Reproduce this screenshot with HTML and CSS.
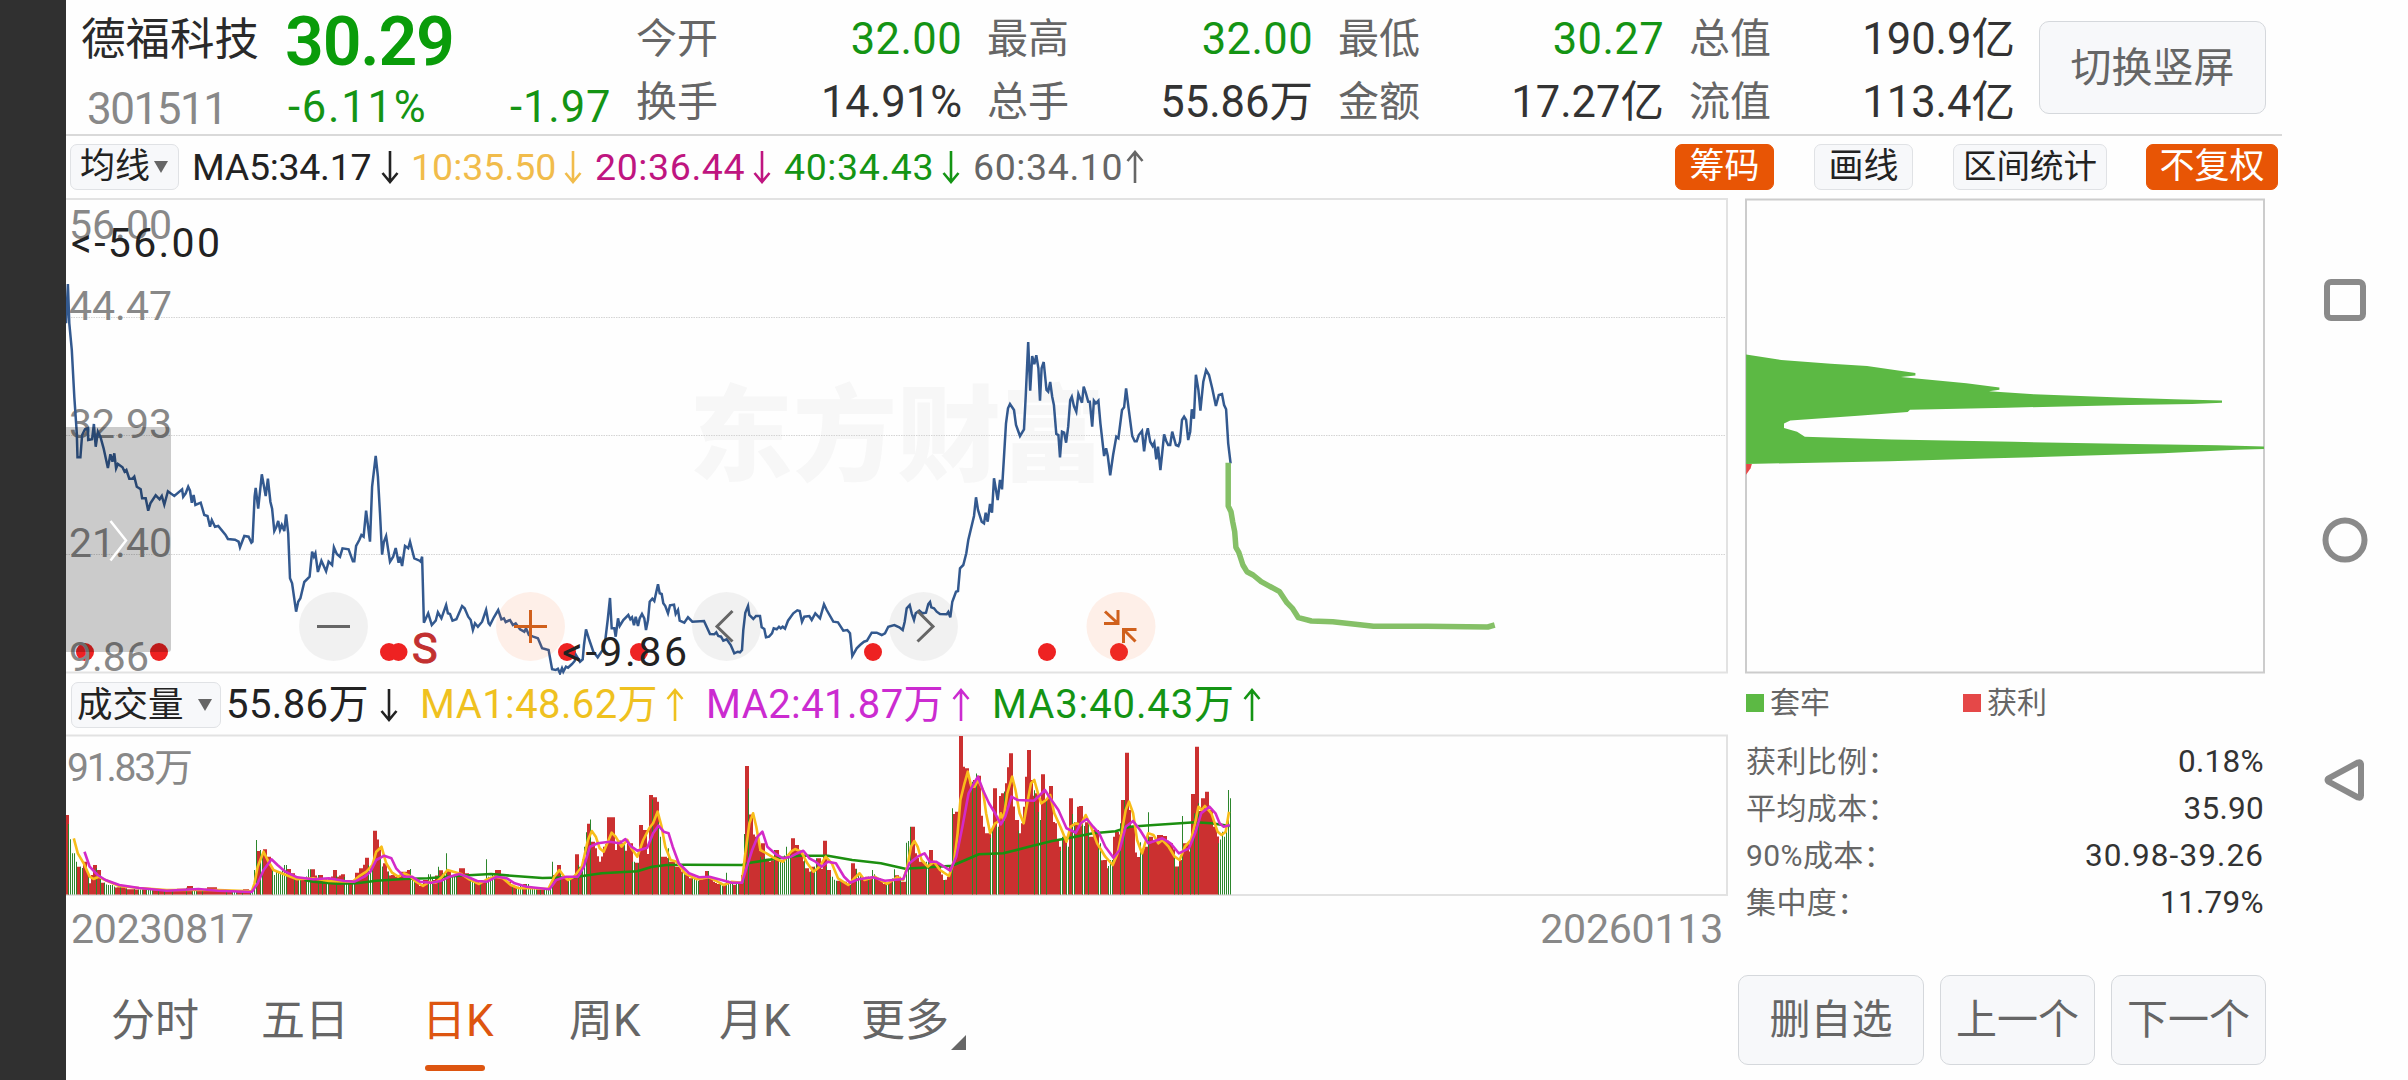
FILE: index.html
```html
<!DOCTYPE html>
<html lang="zh-CN">
<head>
    <meta charset="UTF-8">
    <meta name="viewport" content="width=device-width, initial-scale=1.0">
    <title>德福科技 301511</title>
    <link rel="stylesheet" href="styles.css">
</head>
<body>
    <div class="cutout"></div>
    <div class="app">
        <header class="quote">
            <div class="stock">
                <div class="stock-top">
                    <span class="name">德福科技</span>
                    <span class="price">30.29</span>
                </div>
                <div class="stock-bottom">
                    <span class="code">301511</span>
                    <span class="percent">-6.11%</span>
                    <span class="change">-1.97</span>
                </div>
            </div>
            <dl class="stats">
                <div><dt>今开</dt><dd class="down">32.00</dd></div>
                <div><dt>最高</dt><dd class="down">32.00</dd></div>
                <div><dt>最低</dt><dd class="down">30.27</dd></div>
                <div><dt>总值</dt><dd>190.9亿</dd></div>
                <div><dt>换手</dt><dd>14.91%</dd></div>
                <div><dt>总手</dt><dd>55.86万</dd></div>
                <div><dt>金额</dt><dd>17.27亿</dd></div>
                <div><dt>流值</dt><dd>113.4亿</dd></div>
            </dl>
            <button class="btn rotate">切换竖屏</button>
        </header>

        <div class="toolbar">
            <button class="select ma-select">均线<i class="caret"></i></button>
            <span class="ma ma5">MA5:34.17</span><svg class="arrow ma5" viewBox="0 0 18 34"><path d="M9 1v31M1.500 23l7.500 9 7.500-9"/></svg>
            <span class="ma ma10">10:35.50</span><svg class="arrow ma10" viewBox="0 0 18 34"><path d="M9 1v31M1.500 23l7.500 9 7.500-9"/></svg>
            <span class="ma ma20">20:36.44</span><svg class="arrow ma20" viewBox="0 0 18 34"><path d="M9 1v31M1.500 23l7.500 9 7.500-9"/></svg>
            <span class="ma ma40">40:34.43</span><svg class="arrow ma40" viewBox="0 0 18 34"><path d="M9 1v31M1.500 23l7.500 9 7.500-9"/></svg>
            <span class="ma ma60">60:34.10</span><svg class="arrow ma60" viewBox="0 0 18 34"><path d="M9 33V2M1.500 11L9 2l7.500 9"/></svg>
            <div class="tools">
                <button class="tool on chips-btn">筹码</button>
                <button class="tool draw-btn">画线</button>
                <button class="tool range-btn">区间统计</button>
                <button class="tool on adjust-btn">不复权</button>
            </div>
        </div>

        <main class="main">
            <section class="charts">
                <svg class="price-chart" viewBox="66 198 1662 477">
                    <text class="watermark" x="689" y="473">东方财富</text>
                    <path class="grid" d="M66 317.500H1727M66 435.500H1727M66 554.500H1727"/>
                    <path class="frame" d="M66 199H1727V672.500H66"/>
                    <g class="dots">
                        <circle cx="85" cy="652" r="9"/><circle cx="159" cy="652" r="9"/>
                        <circle cx="389" cy="652" r="9"/><circle cx="398.500" cy="652" r="9"/>
                        <circle cx="567" cy="652" r="9"/><circle cx="639" cy="652" r="9"/>
                        <circle cx="873" cy="652" r="9"/><circle cx="1047" cy="652" r="9"/>
                        <circle cx="1119" cy="652" r="9"/>
                    </g>
                    <text class="sell" x="412" y="663">S</text>
                    <g class="axis">
                        <text x="69" y="239">56.00</text>
                        <text x="69" y="319.500">44.47</text>
                        <text x="69" y="438">32.93</text>
                        <text x="69" y="557">21.40</text>
                        <text x="69" y="671">9.86</text>
                    </g>
                    <path id="price" class="price-line"/>
                    <path id="forecast" class="forecast-line"/>
                    <g class="extreme">
                        <text x="71" y="257" textLength="149">&lt;-56.00</text>
                        <text x="562" y="666" textLength="125">&lt;-9.86</text>
                    </g>
                    <path class="handle" d="M66 427H168a3 3 0 0 1 3 3V649a3 3 0 0 1-3 3H66z"/>
                    <path class="handle-icon" d="M110.500 521L126 540.500 110.500 560.500"/>
                    <g class="round">
                        <circle cx="333.500" cy="626.500" r="34.500"/><path d="M317 626.500H350"/>
                        <circle cx="726.500" cy="626.500" r="34.500"/><path d="M732.500 611L717 626.500 732.500 641.500"/>
                        <circle cx="923.500" cy="626.500" r="34.500"/><path d="M917.500 611L933 626.500 917.500 641.500"/>
                    </g>
                    <g class="round hot">
                        <circle cx="530.500" cy="626.500" r="34.500"/><path d="M514 626.500H547M530.500 610V643"/>
                        <circle cx="1121" cy="626.500" r="34.500"/><path d="M1104 623.500H1118V610M1105 611.500L1118 623.500M1136.500 629.500H1123.500V643M1135.500 641.500L1123.500 629.500"/>
                    </g>
                </svg>

                <div class="volume-bar">
                    <button class="select vol-select">成交量<i class="caret"></i></button>
                    <span class="vol v0">55.86万</span><svg class="arrow v0" viewBox="0 0 18 34"><path d="M9 1v31M1.500 23l7.500 9 7.500-9"/></svg>
                    <span class="vol v1">MA1:48.62万</span><svg class="arrow v1" viewBox="0 0 18 34"><path d="M9 33V2M1.500 11L9 2l7.500 9"/></svg>
                    <span class="vol v2">MA2:41.87万</span><svg class="arrow v2" viewBox="0 0 18 34"><path d="M9 33V2M1.500 11L9 2l7.500 9"/></svg>
                    <span class="vol v3">MA3:40.43万</span><svg class="arrow v3" viewBox="0 0 18 34"><path d="M9 33V2M1.500 11L9 2l7.500 9"/></svg>
                </div>

                <svg class="volume-chart" viewBox="66 734 1662 163">
                    <path class="frame" d="M66 735.500H1727V895H66"/>
                    <text class="vol-max" x="67" y="780.500" textLength="126">91.83万</text>
                    <path id="volUp" class="vol-up"/>
                    <path id="volDown" class="vol-down"/>
                    <path id="volMa3" class="vol-ma ma-c"/>
                    <path id="volMa1" class="vol-ma ma-a"/>
                    <path id="volMa2" class="vol-ma ma-b"/>
                </svg>
                <div class="dates"><span>20230817</span><span>20260113</span></div>
            </section>

            <aside class="side">
                <svg class="chips" viewBox="1745 198 520 476">
                    <rect class="chips-frame" x="1746" y="199.500" width="518" height="473"/>
                    <path id="chipsLoss" class="chips-loss"/>
                    <path id="chipsGain" class="chips-gain"/>
                </svg>
                <div class="legend">
                    <span><i class="loss"></i>套牢</span>
                    <span><i class="gain"></i>获利</span>
                </div>
                <dl class="cost">
                    <div><dt>获利比例：</dt><dd>0.18%</dd></div>
                    <div><dt>平均成本：</dt><dd>35.90</dd></div>
                    <div><dt>90%成本：</dt><dd class="wide-range">30.98-39.26</dd></div>
                    <div><dt>集中度：</dt><dd>11.79%</dd></div>
                </dl>
            </aside>
        </main>

        <footer class="bottom">
            <nav class="tabs">
                <a>分时</a>
                <a>五日</a>
                <a class="active">日K</a>
                <a>周K</a>
                <a>月K</a>
                <a class="more">更多</a>
            </nav>
            <div class="actions">
                <button class="btn wide">删自选</button>
                <button class="btn">上一个</button>
                <button class="btn">下一个</button>
            </div>
        </footer>
    </div>

    <div class="system-nav">
        <svg viewBox="0 0 48 48"><rect x="6" y="6" width="36" height="36" rx="4"/></svg>
        <svg viewBox="0 0 48 48"><circle cx="24" cy="24" r="19.500"/></svg>
        <svg viewBox="0 0 48 48"><path d="M7.500 22.300L37 6.500Q40 5.500 40 8.500V39.500Q40 42.500 37 41.500L7.500 25.700Q5.500 24 7.500 22.300z"/></svg>
    </div>

    <script src="charts.js"></script>
</body>
</html>
```
FILE: styles.css
```css
* {
    box-sizing: border-box;
}
body {
    margin: 0;
    width: 2408px;
    height: 1080px;
    display: flex;
    overflow: hidden;
    background: #fefefe;
    font-family: Roboto, "Noto Sans CJK SC", sans-serif;
    color: #2a2a2a;
}
button {
    font-family: inherit;
    padding: 0;
}
dl, dd {
    margin: 0;
}
.cutout {
    width: 66px;
    background: #303030;
}
.app {
    width: 2216px;
    display: flex;
    flex-direction: column;
}

/* header */
.quote {
    height: 136px;
    display: flex;
    border-bottom: 2px solid #d9d9d9;
}
.stock {
    width: 570px;
    padding: 8px 0 0 15px;
}
.stock-top {
    display: flex;
    height: 68px;
    line-height: 68px;
}
.name {
    width: 204px;
    font-size: 44.5px;
    line-height: 64px;
}
.price {
    font-size: 68px;
    font-weight: 600;
    color: #0a9c0a;
    letter-spacing: -1.2px;
}
.stock-bottom {
    display: flex;
    height: 62px;
    line-height: 63px;
    font-size: 43.5px;
    color: #149414;
}
.code {
    width: 207px;
    padding-left: 6px;
    font-size: 44px;
    line-height: 66px;
    letter-spacing: -1.5px;
    color: #888;
}
.percent {
    width: 222px;
    letter-spacing: 1.8px;
}
.change {
    letter-spacing: 0.9px;
}
.stats {
    width: 1404px;
    display: grid;
    grid-template-columns: repeat(4, 351px);
    grid-template-rows: 63px 63px;
    padding-top: 8px;
    line-height: 63px;
}
.stats div {
    display: flex;
    justify-content: space-between;
    padding-right: 25px;
}
.stats dt {
    font-size: 41px;
    color: #666;
}
.stats dd {
    font-size: 43.5px;
    color: #333;
}
.stats .down {
    color: #149414;
    letter-spacing: 0.4px;
}
.btn {
    background: #f7f8fa;
    border: 1.500px solid #d5d8dc;
    border-radius: 10px;
    font-size: 41px;
    line-height: 84px;
    color: #666;
}
.rotate {
    width: 227px;
    height: 93px;
    margin-top: 21px;
    margin-left: -1px;
}

/* indicator rows */
.toolbar, .volume-bar {
    display: flex;
    align-items: center;
    white-space: nowrap;
}
.toolbar {
    height: 62px;
    padding-left: 4px;
    font-size: 37.5px;
}
.select {
    display: flex;
    align-items: center;
    height: 46px;
    background: #f7f8fa;
    border: 1.500px solid #e0e2e5;
    border-radius: 7px;
    font-size: 35px;
    line-height: 42px;
    color: #222;
}
.caret {
    border-left: 7.500px solid transparent;
    border-right: 7.500px solid transparent;
    border-top: 12px solid #666;
}
.ma-select {
    width: 109px;
    padding-left: 9px;
    margin-right: 13px;
}
.ma-select .caret {
    margin-left: 4px;
}
.arrow {
    width: 18px;
    height: 34px;
    fill: none;
    stroke: currentColor;
    stroke-width: 2.6;
}
.ma {
    width: 153px;
    line-height: 62px;
    letter-spacing: 0.6px;
}
.ma.ma5 {
    width: 189px;
    letter-spacing: -0.3px;
}
.toolbar .arrow {
    margin-right: 13px;
}
.toolbar .arrow.ma5 {
    margin-right: 12px;
}
.ma5 {
    color: #222;
}
.ma10 {
    color: #f1bc4b;
}
.ma.ma10 {
    width: 153px;
    letter-spacing: 0;
}
.ma.ma20, .ma.ma40 {
    width: 158px;
}
.ma20 {
    color: #bf1580;
}
.ma40 {
    color: #149414;
}
.ma60 {
    color: #666;
}
.tools {
    flex: 1;
    display: flex;
    justify-content: flex-end;
    padding-right: 4px;
}
.tool {
    height: 46px;
    background: #f7f8fa;
    border: 1.500px solid #e0e2e5;
    border-radius: 7px;
    font-size: 35px;
    line-height: 40px;
    color: #222;
}
.tool.on {
    background: #e85505;
    border-color: #e85505;
    color: #fff;
}
.chips-btn, .draw-btn {
    width: 99px;
    margin-right: 40px;
}
.range-btn {
    width: 154px;
    margin-right: 39px;
    font-size: 33.5px;
}
.adjust-btn {
    width: 132px;
}

/* charts */
.main {
    height: 764px;
    display: flex;
}
.charts {
    width: 1662px;
    margin-right: 17px;
}
.charts svg, .chips {
    display: block;
}
.price-chart {
    width: 1662px;
    height: 477px;
}
.frame, .chips-frame {
    fill: none;
    stroke: #e2e2e2;
    stroke-width: 2;
}
.chips-frame {
    stroke: #ccc;
}
.grid {
    stroke: #d4d4d4;
    stroke-width: 1;
    stroke-dasharray: 1.500 1;
}
.watermark {
    font-size: 104px;
    font-weight: 900;
    fill: #f7f7f7;
}
.dots {
    fill: #ee2222;
}
.sell {
    font-size: 43px;
    fill: #c23030;
    stroke: #c23030;
    stroke-width: 1;
}
.axis {
    font-size: 41px;
    fill: #888;
}
.extreme {
    font-size: 41px;
    fill: #222;
}
.price-line {
    fill: none;
    stroke: #33598f;
    stroke-width: 2.5;
}
.forecast-line {
    fill: none;
    stroke: #85c067;
    stroke-width: 5.5;
    stroke-linejoin: round;
}
.handle {
    fill: rgba(0, 0, 0, 0.2);
}
.handle-icon {
    fill: none;
    stroke: #fff;
    stroke-width: 2.5;
}
.round circle {
    fill: rgba(0, 0, 0, 0.05);
}
.round path {
    fill: none;
    stroke: #666;
    stroke-width: 3;
}
.round.hot circle {
    fill: rgba(255, 110, 40, 0.1);
}
.round.hot path {
    stroke: #d0601c;
}
.volume-bar {
    height: 59px;
    padding-left: 5px;
    font-size: 40px;
}
.vol-select {
    width: 150px;
    margin-right: 5px;
    padding-left: 5px;
    font-size: 35.5px;
}
.vol-select .caret {
    margin-left: 14px;
}
.vol {
    width: 246px;
    line-height: 59px;
    letter-spacing: 0.4px;
}
.vol.v0 {
    width: 154px;
}
.volume-bar .arrow {
    height: 36px;
    margin-right: 22px;
}
.v0 {
    color: #222;
}
.v1 {
    color: #efc11f;
}
.v2 {
    color: #cb2bd0;
}
.vol.v3 {
    width: 251px;
    letter-spacing: 0.9px;
}
.v3 {
    color: #149414;
}
.volume-chart {
    width: 1662px;
    height: 163px;
}
.vol-max {
    font-size: 39px;
    fill: #888;
}
.vol-up {
    fill: #cb3030;
}
.vol-down {
    fill: #2c862c;
}
.vol-ma {
    fill: none;
    stroke-width: 2.6;
    stroke-linejoin: round;
}
.ma-a {
    stroke: #f8bd1a;
}
.ma-b {
    stroke: #d32ac8;
}
.ma-c {
    stroke: #1c8f10;
}
.dates {
    display: flex;
    justify-content: space-between;
    padding: 0 5px;
    font-size: 41px;
    line-height: 65px;
    letter-spacing: -0.2px;
    color: #888;
}

/* chip distribution */
.side {
    width: 520px;
}
.chips {
    width: 520px;
    height: 476px;
}
.chips-loss {
    fill: #5cb944;
}
.chips-gain {
    fill: #e54848;
}
.legend {
    display: flex;
    height: 57px;
    padding: 0 1px;
    font-size: 30px;
    line-height: 57px;
    color: #666;
}
.legend span {
    width: 217px;
    display: flex;
    align-items: center;
}
.legend i {
    width: 18px;
    height: 18px;
    margin-right: 6px;
}
.loss {
    background: #5cb944;
}
.gain {
    background: #e54848;
}
.cost {
    padding: 7px 1px 0;
    font-size: 30px;
    line-height: 47px;
}
.cost div {
    display: flex;
    justify-content: space-between;
}
.cost dt {
    color: #666;
    letter-spacing: 0.4px;
}
.cost dd {
    font-size: 31.5px;
    letter-spacing: 0.3px;
    color: #333;
}
.cost .wide-range {
    letter-spacing: 1.1px;
}

/* bottom */
.bottom {
    display: flex;
    justify-content: space-between;
    padding: 13px 16px 0 0;
}
.tabs {
    display: flex;
    padding-left: 45px;
}
.tabs a {
    position: relative;
    width: 150px;
    font-size: 44px;
    line-height: 92px;
    color: #666;
}
.tabs a.active {
    padding-left: 11px;
    color: #dd5510;
}
.active::after {
    content: "";
    position: absolute;
    left: 14px;
    top: 90px;
    width: 60px;
    height: 6px;
    border-radius: 3px;
    background: #dd5510;
}
.tabs a.active + a, .tabs a.active + a + a {
    padding-left: 8px;
}
.more::after {
    content: "";
    position: absolute;
    left: 90px;
    top: 60px;
    border-left: 15px solid transparent;
    border-bottom: 15px solid #666;
}
.actions {
    display: flex;
    gap: 16px;
}
.actions .btn {
    width: 155px;
    height: 90px;
}
.actions .wide {
    width: 186px;
}

.system-nav {
    flex: 1;
    display: flex;
    flex-direction: column;
    align-items: center;
    gap: 192px;
    padding-top: 276px;
}
.system-nav svg {
    width: 48px;
    height: 48px;
    flex: none;
    fill: none;
    stroke: #8a8a8a;
    stroke-width: 6;
    stroke-linejoin: round;
}
```
FILE: charts.js
```js
// Every run of points has its own origin and scale: [originX, originY, scaleX, scaleY, "x,y x,y ..."]
function toPoints(runs) {
    const out = [];
    runs.forEach(([ox, oy, sx, sy, text]) => {
        text.trim().split(/\s+/).forEach(p => {
            const [x, y] = p.split(',').map(Number);
            out.push([ox + x / sx, oy + y / sy]);
        });
    });
    return out;
}

function line(id, runs, close) {
    const d = toPoints(runs).map(p => p[0].toFixed(1) + ' ' + p[1].toFixed(1)).join('L');
    document.getElementById(id).setAttribute('d', 'M' + d + (close ? 'z' : ''));
}

line('price', [
    [60, 240, 2.8, 3, `17,250 22,132 26,250 33,330 40,470 47,580 49,652 57,652 62,585 70,568 78,565 79,600 90,598 95,552 100,620 106,575 113,590 122,625
    134,684 141,643 147,665 152,640 157,685 162,672 175,682 181,695 186,690 194,716 203,716 208,710 215,740 226,748 230,775 240,775 247,812 253,790
    268,766 279,778 285,768 292,794 302,754 320,768 342,748 345,770 352,760 359,740 364,752 369,788 374,765 379,795 394,788 404,825 413,828 420,860
    425,840 434,860 443,858 463,884 470,897 490,899 500,905 504,922 516,888 528,890 536,908 539,905 545,770 548,744 555,806 565,703 576,768 582,716
    589,785 594,806 600,873 606,860 611,843 616,870 621,855 628,873 633,823 639,880 644,1015 650,1030 661,1115 667,1085 673,1075 684,1026 699,1010
    706,935 711,950 715,940 722,996 732,962 745,994 752,965 762,975 767,922 775,942 784,950 791,925 808,928 820,964 824,964 829,918 838,900 844,885
    850,890 857,812 868,905 874,740 884,648 890,710 896,820 902,944 907,905 913,888 924,965 933,950 940,924 948,968 952,950 958,978 966,918 975,925
    980,905 986,930 992,955 1007,962 1010,965 1014,950 1019,1148 1031,1120 1041,1155 1052,1142 1058,1117 1068,1135 1081,1095 1086,1120 1092,1122
    1099,1142 1110,1138 1126,1098 1133,1105 1143,1130 1150,1140 1156,1170 1162,1150 1170,1160 1182,1145 1193,1110 1200,1150 1204,1155 1215,1132
    1227,1110 1236,1138 1243,1135 1248,1146 1260,1140 1268,1155 1276,1150 1288,1168 1300,1175 1305,1165 1313,1185 1325,1190 1338,1195 1350,1225
    1368,1230 1378,1288 1388,1290 1394,1286`],
    [560, 400, 3, 3, `0,820 6,805 10,815 18,800 24,803 36,792 44,783 48,765 60,785 68,778 72,735 78,688 88,720 100,755 113,772 128,750 136,720 143,660
    150,594 155,685 163,685 167,710 174,655 179,678 190,660 205,645 211,658 216,652 222,676 227,650 234,678 239,655 246,642 253,655 258,690 264,660
    269,605 277,596 283,603 294,553 299,580 305,582 310,610 316,618 324,640 330,616 342,614 347,642 354,630 359,662 373,668 384,652 397,665 432,663
    450,702 463,703 469,697 475,708 483,710 490,722 500,718 512,735 523,760 533,755 540,757 546,750 550,690 556,638 564,618 568,645 580,657 588,648
    600,648 605,682 613,687 618,712 627,710 636,700 641,685 650,688 657,680 662,685 668,680 675,686 684,662 700,640 712,631 719,633 726,665 733,650
    748,648 755,660 766,640 780,655 792,613 800,630 820,665 834,667 850,692 862,690 870,700 877,768 890,745 900,735 912,725 921,722 935,698 950,698
    965,705 975,700 985,680 1003,675 1018,682 1028,690 1034,665 1040,625 1049,615 1055,640 1062,660 1067,640 1078,632 1087,640 1098,638 1105,612
    1110,606 1114,622 1122,625 1130,635 1140,642 1160,643 1165,636 1171,652 1177,605 1188,575 1194,573 1200,505 1210,495 1219,460 1225,420 1242,348
    1248,292 1254,330 1265,365 1272,370 1277,338 1283,365 1290,312 1296,338 1302,235 1313,300 1320,240 1326,268 1332,170 1338,70 1344,25 1350,12
    1362,30 1368,75 1380,108 1392,88`],
    [900, 320, 2.45, 3, `308,230 314,66 319,212 324,108 329,133 334,106 339,145 343,242 347,145 352,126 359,210 363,215 368,186 373,230 377,255 383,342
    388,345 392,412 397,335 402,338 407,368 412,320 417,240 421,230 426,258 432,275 437,222 446,248 450,200 455,218 461,245 465,245 471,320 475,242
    480,250 486,242 491,310 500,408 505,385 509,408 515,466 522,405 530,350 535,355 544,270 549,262 554,205 560,265 569,348 575,364 580,364 585,345
    593,333 598,394 603,345 607,325 613,365 619,378 623,368 628,418 632,380 638,450 642,405 647,343 652,362 657,375 662,375 667,335 676,375 682,378
    686,365 691,300 696,290 701,300 706,360 711,335 715,268 720,296 725,164 731,210 736,272 743,185 750,150 757,165 765,205 774,258 781,225 789,222
    794,255 799,268 804,370 810,430`]
]);

line('forecast', [
    [900, 320, 2.45, 3, `804,428 804,558 811,575 815,605 820,635 823,682 830,697 840,735 850,755 865,765 885,785 930,815 948,848 962,866 976,893
    1008,903 1060,905 1110,912 1160,919 1290,919 1440,921 1457,915`]
]);

line('chipsLoss', [
    [1700, 340, 2.2147, 2.613, `102,38 180,52 290,62 370,68 477,86 477,93 445,97 590,113 663,124 663,130 640,134 740,142 930,150 1050,155 1156,158
    1156,164 1090,167 950,170 680,177 465,182 460,188 350,198 200,210 186,218 186,230 215,240 232,253 425,260 695,266 960,272 1146,275 1249,278
    1249,285 1188,287 1025,296 860,302 630,310 420,317 102,324`]
], true);
line('chipsGain', [[1700, 340, 2.2147, 2.613, '102,324 115,324 112,335 102,352']], true);

line('volMa1', [
    [60, 680, 2.529, 3, `35,475 45,520 60,550 75,590 85,597 98,590 110,598 150,618 200,624 270,630 330,630 400,630 485,634 492,610 500,560 515,515
    525,540 540,570 560,580 600,598 640,595 680,603 740,605 755,590 775,575 790,555 800,515 813,500 825,550 840,578 855,590 870,580 885,588 900,605
    918,618 935,605 950,608 965,592 980,570 995,575 1015,582 1035,598 1060,612 1080,598 1100,590 1120,595 1140,615 1160,625 1200,625 1235,627
    1250,590 1263,570 1275,590 1285,600 1300,590 1320,560 1335,480 1345,453 1355,470 1365,505 1375,515 1395,458 1405,470 1420,500 1435,480
    1445,505 1460,530 1475,480 1490,445 1500,430`],
    [640, 680, 2.45, 3, `43,395 53,440 62,500 75,540 90,545 110,580 140,598 170,592 190,605 205,615 225,605 250,608 257,530 268,430 277,400 285,440
    295,510 310,520 330,535 350,545 370,515 380,507 395,515 410,550 425,575 440,560 455,530 470,550 485,595 510,615 525,595 538,580 550,600 575,590
    605,612 630,592 645,600 655,560 664,500 672,483 680,500 690,540 705,560 720,545 735,570 757,588 770,540 778,460 785,360 795,310 803,275 812,320
    820,320 828,300 840,330 848,400 858,460 870,430 878,425 884,400 890,420 900,340 912,290 920,330 930,400 940,430 950,360 958,310 966,300 975,340
    983,370 995,360 1005,345 1015,400 1030,440 1045,485 1055,440 1068,430 1080,435 1092,405 1105,440 1120,490 1140,530 1158,555 1170,520 1180,460
    1190,390 1198,365 1208,400 1218,480 1230,520 1245,460 1258,465 1270,490 1280,480 1295,500 1310,530 1322,540 1335,500 1350,480 1360,430 1368,380
    1376,390 1384,378 1400,400 1415,455 1425,465 1435,455 1443,395`]
]);

line('volMa2', [
    [60, 680, 2.529, 3, `62,515 75,560 95,585 115,600 150,615 200,624 270,632 350,627 400,632 485,636 500,610 515,570 535,538 550,555 570,575 600,592
    640,598 680,595 720,603 745,605 770,590 785,575 800,540 820,527 838,535 850,565 870,590 890,590 910,605 940,608 965,602 985,590 1010,582 1030,590
    1055,603 1080,605 1105,590 1130,595 1150,610 1180,620 1238,628 1255,600 1280,590 1310,590 1325,560 1340,500 1360,490 1390,485 1415,490 1430,477
    1445,500 1460,512 1485,503 1500,460`],
    [640, 680, 2.45, 3, `45,437 58,455 70,460 80,500 95,550 120,580 145,592 170,590 200,600 225,608 250,608 262,560 275,510 288,470 300,455 312,500
    330,520 350,535 370,530 385,520 400,512 415,535 430,545 445,560 460,545 480,550 500,590 515,608 535,598 570,592 600,602 645,597 660,550 680,530
    697,520 710,545 725,545 745,560 760,572 775,530 790,440 805,340 818,310 828,290 840,330 855,370 870,400 884,433 895,410 910,350 925,360 965,362
    980,345 992,330 1005,355 1025,390 1045,445 1068,458 1080,430 1095,417 1110,440 1125,460 1140,500 1160,533 1175,510 1190,440 1208,423 1225,450
    1245,490 1280,475 1300,490 1320,520 1345,505 1360,460 1375,400 1395,380 1410,400 1420,430 1430,440 1445,435`]
]);

line('volMa3', [
    [60, 680, 2.529, 3, `618,600 640,605 700,611 750,610 800,602 870,597 930,595 1000,588 1090,582 1150,588 1220,594 1300,592 1370,580 1460,574`],
    [640, 680, 2.45, 3, `30,560 65,555 110,554 250,555 270,548 340,535 390,527 460,527 520,540 590,550 650,566 710,562 765,557 830,523 890,520
    960,498 1010,483 1060,472 1110,460 1165,454 1200,440 1250,436 1360,427 1400,430 1445,438`]
]);

const volume = toPoints([
    [60, 680, 2.529, 3, `16,405 22,432 28,490 34,520 40,545 50,560 60,545 68,580 76,610 86,555 98,570 106,608 125,615 150,622 180,628 220,625 270,632
    310,626 325,618 345,628 385,622 400,632 440,636 470,628 485,632 491,570 497,480 505,510 515,508 525,530 535,570 550,575 573,555 585,580 600,600
    638,568 645,595 655,585 680,598 694,570 700,590 714,583 725,600 745,600 750,578 760,565 775,533 785,560 790,560 795,452 802,465 808,535 820,550
    828,575 845,590 870,575 886,567 893,595 910,618 925,600 932,583 945,600 957,560 965,580 972,580 977,520 982,570 995,590 1017,565 1025,580
    1045,605 1073,600 1078,538 1083,590 1106,570 1115,590 1130,605 1150,620 1180,612 1200,628 1238,625 1245,545 1250,585 1260,555 1270,590 1300,590
    1306,523 1312,560 1325,500 1332,457 1337,372 1342,437 1350,505 1362,545 1375,500 1388,412 1395,412 1400,510 1408,510 1413,445 1418,490 1440,490
    1447,545 1463,550 1468,435 1475,450 1487,530 1493,345 1500,352`],
    [640, 680, 2.45, 3, `41,365 48,470 55,530 68,505 75,545 90,560 105,580 130,595 150,598 165,573 175,605 195,612 207,615 212,578 218,608 245,608
    250,585 255,462 261,258 267,345 272,440 278,470 286,480 292,530 300,490 305,530 315,545 330,510 345,540 360,500 368,520 374,475 384,495 392,515
    400,540 412,575 425,560 433,535 447,570 452,482 457,560 468,590 480,602 500,605 515,615 521,550 526,568 545,595 557,590 570,570 580,595 600,612
    612,600 624,568 632,590 645,605 652,488 662,440 667,440 672,520 685,545 707,545 712,510 717,555 730,550 742,600 755,590 760,560 765,385 773,395
    780,395 785,168 790,260 797,265 803,310 819,300 825,240 830,310 838,440 850,460 863,450 868,325 873,440 878,440 883,348 888,340 897,310 902,262
    908,220 913,400 922,420 930,460 938,430 944,290 951,210 956,300 963,325 970,340 981,420 986,283 991,360 1001,350 1006,318 1011,430 1025,500
    1035,470 1050,500 1055,355 1061,385 1068,430 1074,380 1079,378 1084,430 1090,400 1095,380 1103,470 1115,450 1125,490 1135,540 1143,565 1155,540
    1163,470 1168,435 1177,430 1182,360 1187,360 1192,218 1197,390 1205,440 1215,540 1225,487 1240,500 1245,397 1250,470 1262,480 1272,465 1281,510
    1286,407 1291,500 1300,490 1308,530 1318,560 1324,540 1329,408 1334,490 1348,490 1353,342 1358,400 1363,200 1368,370 1380,355 1388,335 1395,390
    1405,440 1418,490 1423,412 1428,470 1438,430 1442,225 1447,355`]
]);

// repeatable noise so that the bars do not change on reload
let seed = 20230817;
function rand() {
    seed = (seed * 1103515245 + 12345) % 2147483648;
    return seed / 2147483648;
}

// one bar per trading day, 2px apart
const base = 894.5;
let up = '', down = '', rising = false, k = 0;
for (let x = 66; x <= 1231; x += 2) {
    while (k < volume.length - 2 && volume[k + 1][0] < x) k++;
    const a = volume[k], b = volume[k + 1];
    const t = Math.min(1, Math.max(0, (x - a[0]) / (b[0] - a[0])));
    let h = base - (a[1] + (b[1] - a[1]) * t);
    let marked = true;
    // keep the marked days at full height
    if (t < 0.3) h = base - a[1];
    else if (t > 0.7) h = base - b[1];
    else {
        h *= 0.82 + 0.18 * rand();
        marked = false;
    }
    const quiet = (x > 68 && x < 78) || (x > 102 && x < 114) || (x > 270 && x < 283) || x > 1217;
    if (rand() < (rising ? 0.3 : 0.55)) rising = !rising;
    const red = !quiet && (rising || (marked && h > 95));
    if (red) {
        up += `M${x - 1} ${base}v${-h.toFixed(1)}h4V${base}z`;
    } else {
        down += `M${x} ${base}v${-h.toFixed(1)}h1V${base}z`;
    }
}
document.getElementById('volUp').setAttribute('d', up);
document.getElementById('volDown').setAttribute('d', down);
```
